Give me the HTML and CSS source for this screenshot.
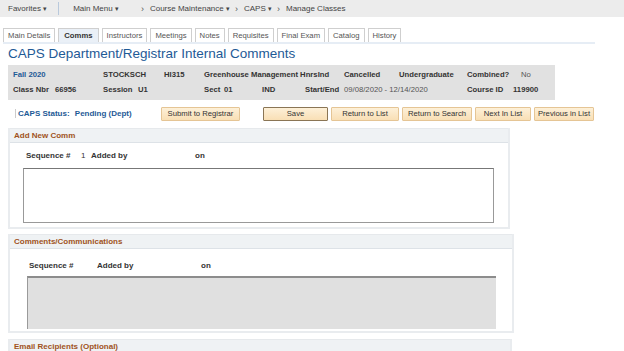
FILE: index.html
```html
<!DOCTYPE html>
<html lang="en">
<head>
    <meta charset="UTF-8">
    <title>Manage Classes - CAPS Comments</title>
    <link rel="stylesheet" href="styles.css">
</head>
<body>
    <div class="topbar">
        <span class="nav-item">Favorites <span class="caret">▾</span></span>
        <span class="nav-sep"></span>
        <span class="nav-item">Main Menu <span class="caret">▾</span></span>
        <span class="crumb">›</span>
        <span class="nav-item">Course Maintenance <span class="caret">▾</span></span>
        <span class="crumb">›</span>
        <span class="nav-item">CAPS <span class="caret">▾</span></span>
        <span class="crumb">›</span>
        <span class="nav-item">Manage Classes</span>
    </div>

    <div class="tabs">
        <span class="tab">Main Details</span>
        <span class="tab active">Comms</span>
        <span class="tab">Instructors</span>
        <span class="tab">Meetings</span>
        <span class="tab">Notes</span>
        <span class="tab">Requisites</span>
        <span class="tab">Final Exam</span>
        <span class="tab">Catalog</span>
        <span class="tab">History</span>
    </div>

    <h1 class="page-title">CAPS Department/Registrar Internal Comments</h1>

    <div class="infobox">
        <span class="lnk r1 c1-3">Fall 2020</span>
        <span class="lbl r1 c3-5">STOCKSCH</span>
        <span class="lbl r1 c5">HI315</span>
        <span class="lbl r1 c6-10">Greenhouse Management HnrsInd</span>
        <span class="lbl r1 c10">Cancelled</span>
        <span class="lbl r1 c11">Undergraduate</span>
        <span class="lbl r1 c12-14">Combined?</span>
        <span class="val r1 c14">No</span>

        <span class="lbl r2 c1">Class Nbr</span>
        <span class="lbl r2 c2">66956</span>
        <span class="lbl r2 c3">Session</span>
        <span class="lbl r2 c4">U1</span>
        <span class="lbl r2 c6">Sect</span>
        <span class="lbl r2 c7">01</span>
        <span class="lbl r2 c8">IND</span>
        <span class="lbl r2 c9">Start/End</span>
        <span class="val r2 c10-12">09/08/2020 - 12/14/2020</span>
        <span class="lbl r2 c12">Course ID</span>
        <span class="lbl r2 c13-15">119900</span>
    </div>

    <div class="status-row">
        <div class="status">
            <span class="status-label">CAPS Status:</span>
            <span class="status-value">Pending (Dept)</span>
        </div>
        <button class="btn submit">Submit to Registrar</button>
        <button class="btn save">Save</button>
        <button class="btn to-list">Return to List</button>
        <button class="btn to-search">Return to Search</button>
        <button class="btn next">Next In List</button>
        <button class="btn prev">Previous in List</button>
    </div>

    <div class="section add-comm">
        <div class="section-head">Add New Comm</div>
        <div class="section-body">
            <div class="meta-row">
                <span class="m-seq">Sequence #</span>
                <span class="m-num">1</span>
                <span class="m-added">Added by</span>
                <span>on</span>
            </div>
            <div class="comment-input"></div>
        </div>
    </div>

    <div class="section comms">
        <div class="section-head">Comments/Communications</div>
        <div class="section-body">
            <div class="meta-row">
                <span class="m-seq2">Sequence #</span>
                <span class="m-added2">Added by</span>
                <span>on</span>
            </div>
            <div class="comment-readonly"></div>
        </div>
    </div>

    <div class="section email">
        <div class="section-head">Email Recipients (Optional)</div>
    </div>
</body>
</html>
```

FILE: styles.css
```css
body {
    font-family: "Liberation Sans", Arial, sans-serif;
    font-size: 8px;
    color: #333;
    margin: 0;
    background-color: #fff;
    height: 351px;
    overflow: hidden;
}

/* header navigation */
.topbar {
    display: flex;
    align-items: center;
    height: 17px;
    padding-left: 8px;
    background-color: #ececec;
    color: #444;
}
.nav-item {
    white-space: nowrap;
}
.caret {
    font-size: 7px;
}
.nav-sep {
    width: 1px;
    height: 13px;
    background-color: #b9c9dc;
    margin: 0 14px 0 11px;
}
.crumb {
    margin: 0 6px 0 22px;
    font-size: 9px;
    color: #555;
}
.topbar .crumb ~ .crumb {
    margin-left: 5px;
}

/* tabs */
.tabs {
    display: flex;
    gap: 3px;
    margin: 11px 0 0 3px;
    width: 592px;
    border-bottom: 2px solid #e6edf5;
}
.tab {
    padding: 2px 4px 1px;
    border: 1px solid #cfcfcf;
    border-bottom: none;
    color: #555;
    background-color: #fff;
    line-height: 10px;
    font-size: 7.7px;
    white-space: nowrap;
}
.tab.active {
    font-weight: bold;
    color: #333;
    background-color: #eaf0f7;
    padding: 2px 5px 1px;
}

.page-title {
    font-size: 13.5px;
    font-weight: normal;
    color: #1e5a96;
    margin: 1px 0 0 8px;
    line-height: 17px;
}

/* class info */
.infobox {
    display: grid;
    grid-template-columns: 42px 48px 35px 26px 40px 20px 38px 43px 39px 55px 68px 46px 8px 34px;
    row-gap: 6px;
    width: 542px;
    margin: 3px 0 0 8px;
    padding: 5px 0 6px 5px;
    background-color: #e1e1e1;
    font-weight: bold;
    font-size: 7.7px;
    color: #333;
    white-space: nowrap;
    line-height: 9px;
}
.r1 { grid-row: 1; }
.r2 { grid-row: 2; }
.c1 { grid-column: 1; }
.c1-3 { grid-column: 1 / 3; }
.c2 { grid-column: 2; }
.c3 { grid-column: 3; }
.c3-5 { grid-column: 3 / 5; }
.c4 { grid-column: 4; }
.c5 { grid-column: 5; }
.c6 { grid-column: 6; }
.c6-10 { grid-column: 6 / 10; }
.c7 { grid-column: 7; }
.c8 { grid-column: 8; }
.c9 { grid-column: 9; }
.c10 { grid-column: 10; }
.c10-12 { grid-column: 10 / 12; }
.c11 { grid-column: 11; }
.c12 { grid-column: 12; }
.c12-14 { grid-column: 12 / 14; }
.c13-15 { grid-column: 13 / 15; }
.c14 { grid-column: 14; }
.lnk {
    color: #1e5a96;
}
.val {
    font-weight: normal;
    color: #555;
}

/* status and actions */
.status-row {
    display: flex;
    align-items: center;
    margin: 6px 0 0 15px;
    height: 15px;
}
.status {
    width: 143px;
    border-left: 1px solid #ccc;
    padding-left: 2px;
    color: #1e5a96;
    font-weight: bold;
    white-space: nowrap;
}
.status-label {
    margin-right: 3px;
}
.status-value {
    color: #1e5a96;
}
.btn {
    font-family: inherit;
    font-size: 7.7px;
    color: #333;
    height: 14px;
    padding: 0;
    margin-right: 3px;
    background: linear-gradient(#fdf0d8, #f9dfb5);
    border: 1px solid #e5c595;
    border-radius: 1px;
    line-height: 12px;
    white-space: nowrap;
    text-align: center;
}
.btn.submit {
    width: 79px;
    margin-right: 23px;
}
.btn.save {
    width: 65px;
    border-color: #8a7555;
}
.btn.to-list { width: 68px; }
.btn.to-search { width: 70px; }
.btn.next { width: 56px; }
.btn.prev { width: 60px; }

/* sections */
.section {
    margin-left: 8px;
    border: 2px solid #e9ecef;
    border-top: none;
}
.section-head {
    background-color: #eff2f4;
    border-top: 1px solid #e6e9ec;
    border-bottom: 1px solid #dde2e7;
    color: #a0521c;
    font-weight: bold;
    padding: 2px 4px;
    line-height: 9px;
}
.add-comm {
    width: 498px;
    margin-top: 7px;
}
.add-comm .section-body {
    padding: 8px 0 4px 16px;
}
.meta-row {
    display: flex;
    font-weight: bold;
    color: #333;
    line-height: 9px;
}
.m-seq {
    width: 55px;
}
.m-num {
    width: 10px;
    font-weight: normal;
}
.m-added {
    width: 104px;
}
.comment-input {
    width: 469px;
    height: 53px;
    margin: 8px 0 0 -3px;
    border: 1px solid #999;
    border-top-color: #777;
    background-color: #fff;
}

.comms {
    width: 502px;
    margin-top: 5px;
}
.comms .section-body {
    padding: 12px 0 2px 19px;
}
.m-seq2 {
    width: 68px;
}
.m-added2 {
    width: 104px;
}
.comment-readonly {
    width: 468px;
    height: 51px;
    margin: 6px 0 0 -2px;
    background-color: #e0e0e0;
    border-top: 2px solid #8c8c8c;
    border-left: 1px solid #9a9a9a;
}

.email {
    width: 500px;
    margin-top: 6px;
    height: 20px;
}
```
